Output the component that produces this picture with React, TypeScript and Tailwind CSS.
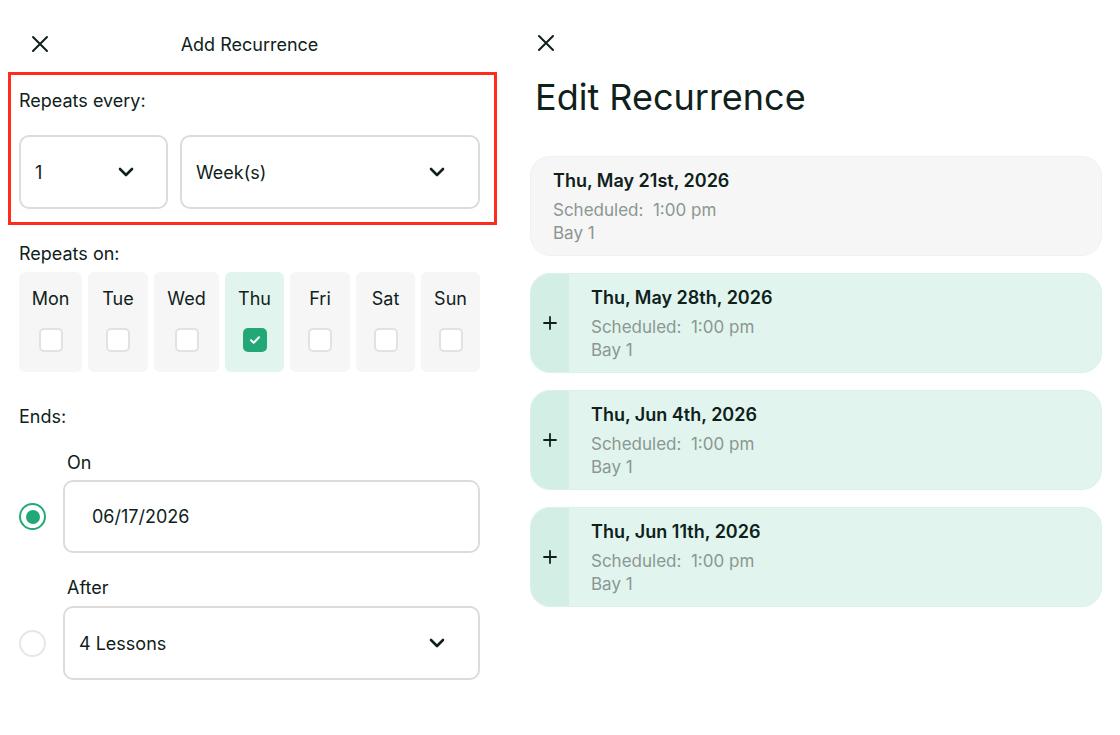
import React from "react";

const ink = "text-[#0f211b]";

function CloseIcon() {
    return (
        <svg width="18" height="18" viewBox="0 0 18 18" fill="none" stroke="#0f211b" strokeWidth="2" strokeLinecap="round">
            <path d="M2 2L16 16M16 2L2 16" />
        </svg>
    );
}

function Chevron() {
    return (
        <svg width="16" height="10" viewBox="0 0 16 10" fill="none" stroke="#0f211b" strokeWidth="2.6" strokeLinecap="round" strokeLinejoin="round">
            <path d="M2 2L8 8L14 2" />
        </svg>
    );
}

function Select({ value, className }: { value: string; className: string }) {
    return (
        <div className={`flex h-[74px] items-center justify-between rounded-[10px] border-2 border-[#dcdcdc] bg-white pl-[14px] pr-[32px] ${className}`}>
            <span className={`text-[18px] ${ink}`}>{value}</span>
            <Chevron />
        </div>
    );
}

function DayBox({ day, checked, className }: { day: string; checked?: boolean; className: string }) {
    return (
        <div className={`flex h-[100px] flex-col items-center rounded-[6px] pt-[15px] ${checked ? "bg-[#e1f5ee]" : "bg-[#f6f6f6]"} ${className}`}>
            <span className={`text-[18px] leading-[24px] ${ink}`}>{day}</span>
            {checked ? (
                <div className="mt-[17px] flex h-[24px] w-[24px] items-center justify-center rounded-[5px] bg-[#22a877]">
                    <svg width="12" height="10" viewBox="0 0 12 10" fill="none" stroke="white" strokeWidth="2" strokeLinecap="round" strokeLinejoin="round">
                        <path d="M2 5.2L4.7 7.8L10 2.2" />
                    </svg>
                </div>
            ) : (
                <div className="mt-[17px] h-[24px] w-[24px] rounded-[5px] border-2 border-[#e2e2e2] bg-white" />
            )}
        </div>
    );
}

function Radio({ on }: { on?: boolean }) {
    return on ? (
        <div className="flex h-[27px] w-[27px] shrink-0 items-center justify-center rounded-full border-2 border-[#22a877] bg-white">
            <div className="h-[14px] w-[14px] rounded-full bg-[#22a877]" />
        </div>
    ) : (
        <div className="h-[27px] w-[27px] shrink-0 rounded-full border-2 border-[#e6e6e6] bg-white" />
    );
}

function LessonCard({ date, added }: { date: string; added?: boolean }) {
    return (
        <div className={`flex h-[100px] overflow-hidden rounded-[20px] border ${added ? "border-[#d9f1e8] bg-[#e1f5ee]" : "border-[#f1f1f1] bg-[#f6f6f6]"}`}>
            {added && (
                <div className="flex w-[38px] shrink-0 items-center justify-center bg-[#d3efe5]">
                    <svg width="14" height="14" viewBox="0 0 14 14" fill="none" stroke="#0f211b" strokeWidth="1.8" strokeLinecap="round">
                        <path d="M7 1V13M1 7H13" />
                    </svg>
                </div>
            )}
            <div className="flex flex-col pl-[22px] pt-[12px]">
                <span className={`text-[18px] font-semibold leading-[24px] ${ink}`}>{date}</span>
                <span className="mt-[6px] whitespace-pre text-[17px] leading-[23px] text-[#8b9792]">Scheduled:  1:00 pm</span>
                <span className="text-[17px] leading-[23px] text-[#8b9792]">Bay 1</span>
            </div>
        </div>
    );
}

export default function App() {
    return (
        <div className="flex h-[735px] w-[1120px] bg-white font-['Inter','Liberation_Sans',sans-serif]">
            {/* add recurrence */}
            <div className="flex w-[500px] shrink-0 flex-col pl-[19px] pr-[20px]">
                <div className="mt-[30px] grid h-[28px] grid-cols-[1fr_auto_1fr] items-center">
                    <div className="ml-[12px]">
                        <CloseIcon />
                    </div>
                    <span className={`text-[18px] ${ink}`}>Add Recurrence</span>
                    <div />
                </div>

                <div className="-ml-[11px] -mr-[17px] mt-[14px] border-[3px] border-[#ff2b1c] pb-[13px] pl-[8px] pr-[14px] pt-[14px]">
                    <div className={`text-[18px] leading-[24px] ${ink}`}>Repeats every:</div>
                    <div className="mt-[22px] flex gap-[12px]">
                        <Select value="1" className="w-[149px]" />
                        <Select value="Week(s)" className="flex-1 pr-[33px]" />
                    </div>
                </div>

                <div className={`mt-[17px] text-[18px] leading-[24px] ${ink}`}>Repeats on:</div>
                <div className="mt-[6px] flex gap-[6px]">
                    <DayBox day="Mon" className="w-[63px]" />
                    <DayBox day="Tue" className="w-[60px]" />
                    <DayBox day="Wed" className="w-[65px]" />
                    <DayBox day="Thu" checked className="w-[59px]" />
                    <DayBox day="Fri" className="w-[60px]" />
                    <DayBox day="Sat" className="w-[59px]" />
                    <DayBox day="Sun" className="flex-1" />
                </div>

                <div className={`mt-[33px] text-[18px] leading-[24px] ${ink}`}>Ends:</div>

                <div className={`ml-[48px] mt-[22px] text-[18px] leading-[24px] ${ink}`}>On</div>
                <div className="mt-[5px] flex items-center gap-[17px]">
                    <Radio on />
                    <div className="flex h-[73px] flex-1 items-center rounded-[10px] border-2 border-[#dcdcdc] bg-white pl-[27px]">
                        <span className={`text-[18px] ${ink}`}>06/17/2026</span>
                    </div>
                </div>

                <div className={`ml-[48px] mt-[23px] text-[18px] leading-[24px] ${ink}`}>After</div>
                <div className="mt-[6px] flex items-center gap-[17px]">
                    <Radio />
                    <Select value="4 Lessons" className="flex-1 pr-[33px]" />
                </div>
            </div>

            {/* edit recurrence */}
            <div className="flex flex-1 flex-col pl-[30px] pr-[18px]">
                <div className="ml-[7px] mt-[34px]">
                    <CloseIcon />
                </div>
                <h1 className={`ml-[5px] mt-[22px] text-[36px] font-normal leading-[46px] ${ink}`}>Edit Recurrence</h1>
                <div className="mt-[36px] flex flex-col gap-[17px]">
                    <LessonCard date="Thu, May 21st, 2026" />
                    <LessonCard date="Thu, May 28th, 2026" added />
                    <LessonCard date="Thu, Jun 4th, 2026" added />
                    <LessonCard date="Thu, Jun 11th, 2026" added />
                </div>
            </div>
        </div>
    );
}
